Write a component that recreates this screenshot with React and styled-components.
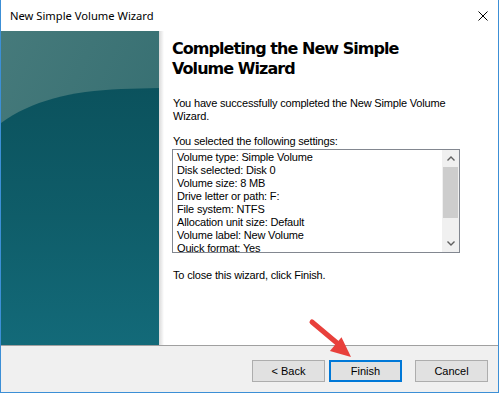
import React from 'react';
import styled, { createGlobalStyle } from 'styled-components';

const GlobalStyle = createGlobalStyle`
  html, body {
    margin: 0;
    padding: 0;
    background: #ffffff;
  }
`;

const Window = styled.div`
  position: relative;
  width: 499px;
  height: 393px;
  box-sizing: border-box;
  border: 1px solid #3c8fd6;
  border-top: none;
  display: flex;
  flex-direction: column;
  background: #ffffff;
  font-family: 'Liberation Sans', Arial, sans-serif;
  font-size: 11px;
  color: #000;
  overflow: hidden;
`;

const TitleBar = styled.div`
  height: 31px;
  display: flex;
  align-items: center;
  justify-content: space-between;
  padding: 0 10px 0 9px;
  font-family: 'Segoe UI', 'Noto Sans', sans-serif;
  font-size: 11.2px;
  color: #000;
`;

const CloseButton = styled.svg`
  width: 10px;
  height: 10px;
`;

const Body = styled.div`
  display: flex;
  height: 314px;
`;

const SidePanel = styled.svg`
  display: block;
  width: 158px;
  height: 314px;
  flex-shrink: 0;
`;

const Shade = styled.div`
  width: 5px;
  flex-shrink: 0;
  background: linear-gradient(to right, #d9d9d9, #f3f3f3 70%, #ffffff);
`;

const Content = styled.div`
  flex: 1;
  padding: 8px 0 0 8px;
`;

const Heading = styled.h1`
  margin: 0;
  font-family: Tahoma, 'DejaVu Sans', sans-serif;
  font-weight: bold;
  font-size: 16px;
  line-height: 20px;
  letter-spacing: -0.95px;
  width: 280px;
`;

const Paragraph = styled.p`
  margin: ${(p) => p.$top}px 0 0 1px;
  line-height: 13px;
  letter-spacing: -0.17px;
  width: 290px;
`;

const ListBox = styled.div`
  margin-top: 1px;
  width: 288px;
  height: 104px;
  box-sizing: border-box;
  border: 1px solid #828790;
  display: flex;
  overflow: hidden;
`;

const ListLines = styled.div`
  flex: 1;
  padding: 1px 0 0 4px;
  line-height: 13px;
  letter-spacing: -0.17px;
  overflow: hidden;
  white-space: nowrap;
`;

const ScrollBar = styled.div`
  width: 17px;
  background: #f0f0f0;
  display: flex;
  flex-direction: column;
  align-items: center;
`;

const ArrowBox = styled.div`
  height: 17px;
  width: 100%;
  display: flex;
  align-items: center;
  justify-content: center;
`;

const Thumb = styled.div`
  width: 15px;
  height: 51px;
  background: #cdcdcd;
`;

const Track = styled.div`
  flex: 1;
`;

const Footer = styled.div`
  flex: 1;
  border-top: 1px solid #a0a0a0;
  background: #f0f0f0;
  display: flex;
  justify-content: flex-end;
  align-items: flex-start;
  padding: 14px 10px 0 0;
`;

const Button = styled.button`
  width: 73px;
  height: 22px;
  box-sizing: border-box;
  margin-left: ${(p) => p.$gap}px;
  background: #e1e1e1;
  border: ${(p) => (p.$primary ? '2px solid #0078d7' : '1px solid #adadad')};
  font-family: 'Liberation Sans', Arial, sans-serif;
  font-size: 11px;
  color: #000;
  padding: 0;
`;

const Pointer = styled.svg`
  position: absolute;
  left: 0;
  top: 0;
  width: 499px;
  height: 393px;
  pointer-events: none;
`;

const settings = [
  'Volume type: Simple Volume',
  'Disk selected: Disk 0',
  'Volume size: 8 MB',
  'Drive letter or path: F:',
  'File system: NTFS',
  'Allocation unit size: Default',
  'Volume label: New Volume',
  'Quick format: Yes',
];

const Chevron = ({ up }) => (
  <svg width="8" height="5" viewBox="0 0 8 5">
    <path
      d={up ? 'M0.5 4.5 L4 1 L7.5 4.5' : 'M0.5 0.5 L4 4 L7.5 0.5'}
      fill="none"
      stroke="#606060"
      strokeWidth="1.4"
    />
  </svg>
);

const App = () => {
  return (
    <>
      <GlobalStyle />
      <Window>
        <TitleBar>
          <span>New Simple Volume Wizard</span>
          <CloseButton viewBox="0 0 10 10">
            <path d="M0.5 0.5 L9.5 9.5 M9.5 0.5 L0.5 9.5" stroke="#000" strokeWidth="1" />
          </CloseButton>
        </TitleBar>
        <Body>
          <SidePanel viewBox="0 0 158 314" preserveAspectRatio="none">
            <defs>
              <linearGradient id="top" x1="0" y1="0" x2="1" y2="1">
                <stop offset="0" stopColor="#467a7b" />
                <stop offset="1" stopColor="#2f6a6e" />
              </linearGradient>
              <linearGradient id="low" x1="0" y1="0" x2="0" y2="1">
                <stop offset="0" stopColor="#0b525d" />
                <stop offset="0.5" stopColor="#0f5d69" />
                <stop offset="1" stopColor="#136a79" />
              </linearGradient>
            </defs>
            <rect width="158" height="314" fill="url(#top)" />
            <path d="M0 92 C30 70 70 60 120 58 L158 57 L158 314 L0 314 Z" fill="url(#low)" />
          </SidePanel>
          <Shade />
          <Content>
            <Heading>Completing the New Simple Volume Wizard</Heading>
            <Paragraph $top={18}>
              You have successfully completed the New Simple Volume Wizard.
            </Paragraph>
            <Paragraph $top={12}>You selected the following settings:</Paragraph>
            <ListBox>
              <ListLines>
                {settings.map((s) => (
                  <div key={s}>{s}</div>
                ))}
              </ListLines>
              <ScrollBar>
                <ArrowBox>
                  <Chevron up />
                </ArrowBox>
                <Thumb />
                <Track />
                <ArrowBox>
                  <Chevron />
                </ArrowBox>
              </ScrollBar>
            </ListBox>
            <Paragraph $top={16}>To close this wizard, click Finish.</Paragraph>
          </Content>
        </Body>
        <Footer>
          <Button $gap={0}>&lt; Back</Button>
          <Button $gap={4} $primary>
            Finish
          </Button>
          <Button $gap={13}>Cancel</Button>
        </Footer>
        <Pointer viewBox="0 0 499 393">
          <path d="M311 322 L336 343" stroke="#e8403b" strokeWidth="5" strokeLinecap="round" />
          <polygon points="350,357 328.9,351 340.5,337.2" fill="#e8403b" />
        </Pointer>
      </Window>
    </>
  );
};

export default App;
